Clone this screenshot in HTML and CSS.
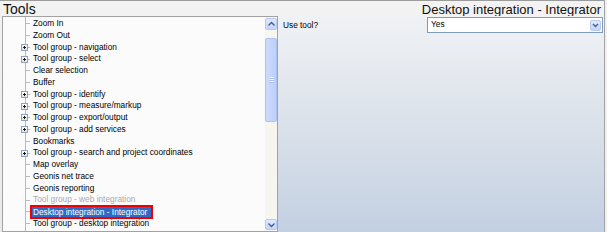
FILE: index.html
```html
<!DOCTYPE html>
<html>
<head>
<meta charset="utf-8">
<title>Tools</title>
<link rel="stylesheet" href="styles.css">
</head>
<body>
<div class="app">
  <div class="header">
    <span class="h-left">Tools</span>
    <span class="h-right">Desktop integration - Integrator</span>
  </div>
  <div class="main">
    <div class="tree-pane">
      <ul class="tree">
        <li class="node"><span class="twig"><span class="hline"></span></span><span class="label">Zoom In</span></li>
        <li class="node"><span class="twig"><span class="hline"></span></span><span class="label">Zoom Out</span></li>
        <li class="node group"><span class="twig"><span class="plus"></span><span class="hline"></span></span><span class="label">Tool group - navigation</span></li>
        <li class="node group"><span class="twig"><span class="plus"></span><span class="hline"></span></span><span class="label">Tool group - select</span></li>
        <li class="node"><span class="twig"><span class="hline"></span></span><span class="label">Clear selection</span></li>
        <li class="node"><span class="twig"><span class="hline"></span></span><span class="label">Buffer</span></li>
        <li class="node group"><span class="twig"><span class="plus"></span><span class="hline"></span></span><span class="label">Tool group - identify</span></li>
        <li class="node group"><span class="twig"><span class="plus"></span><span class="hline"></span></span><span class="label">Tool group - measure/markup</span></li>
        <li class="node group"><span class="twig"><span class="plus"></span><span class="hline"></span></span><span class="label">Tool group - export/output</span></li>
        <li class="node group"><span class="twig"><span class="plus"></span><span class="hline"></span></span><span class="label">Tool group - add services</span></li>
        <li class="node"><span class="twig"><span class="hline"></span></span><span class="label">Bookmarks</span></li>
        <li class="node group"><span class="twig"><span class="plus"></span><span class="hline"></span></span><span class="label">Tool group - search and project coordinates</span></li>
        <li class="node"><span class="twig"><span class="hline"></span></span><span class="label">Map overlay</span></li>
        <li class="node"><span class="twig"><span class="hline"></span></span><span class="label">Geonis net trace</span></li>
        <li class="node"><span class="twig"><span class="hline"></span></span><span class="label">Geonis reporting</span></li>
        <li class="node disabled"><span class="twig"><span class="hline"></span></span><span class="label">Tool group - web integration</span></li>
        <li class="node selected"><span class="twig"><span class="hline"></span></span><span class="label">Desktop integration - Integrator</span></li>
        <li class="node"><span class="twig"><span class="hline"></span></span><span class="label">Tool group - desktop integration</span></li>
      </ul>
      <div class="scrollbar">
        <div class="sb-btn"><svg width="9" height="6" viewBox="0 0 9 6"><path d="M1.5 4.5 L4.5 1.5 L7.5 4.5" fill="none" stroke="#4a5e88" stroke-width="1.4"/></svg></div>
        <div class="sb-track">
          <div class="sb-thumb"><span class="grip"></span></div>
        </div>
        <div class="sb-btn"><svg width="9" height="6" viewBox="0 0 9 6"><path d="M1.5 1.5 L4.5 4.5 L7.5 1.5" fill="none" stroke="#4a5e88" stroke-width="1.4"/></svg></div>
      </div>
    </div>
    <div class="props">
      <span class="prop-label">Use tool?</span>
      <div class="combo">
        <span class="combo-value">Yes</span>
        <span class="combo-btn"><svg width="7" height="5" viewBox="0 0 7 5"><path d="M1 1 L3.5 3.5 L6 1" fill="none" stroke="#4a5e88" stroke-width="1.4"/></svg></span>
      </div>
    </div>
  </div>
</div>
</body>
</html>
```
FILE: styles.css
```css
html, body {
  margin: 0;
  padding: 0;
}

body {
  background: #f0f0f0;
  font-family: "Liberation Sans", Arial, sans-serif;
  color: #000;
}

.app {
  width: 604px;
  height: 231px;
  border-top: 1px solid #9b9b9b;
  border-right: 1px solid #a3a3a3;
  display: flex;
  flex-direction: column;
  background: linear-gradient(#f3f3f3, #e9e9e9);
}

.header {
  height: 14px;
  padding: 1px 3px 0 3px;
  display: flex;
  justify-content: space-between;
  font-size: 13px;
  line-height: 15px;
  color: #111;
  white-space: nowrap;
}

.h-left {
  font-size: 14px;
}

.main {
  flex: 1;
  display: flex;
  min-height: 0;
}

.tree-pane {
  margin-left: 2px;
  width: 274px;
  border: 1px solid #a2a2a2;
  display: flex;
  background: #fbfbfb;
}

.tree {
  flex: 1;
  margin: 0;
  padding: 1px 0 0 0;
  list-style: none;
  overflow: hidden;
  background: linear-gradient(#b9b9b9, #b9b9b9) no-repeat 22px 0 / 1px 100%;
}

.node {
  height: 11.75px;
  display: flex;
  align-items: center;
  white-space: nowrap;
  font-size: 8.3px;
  line-height: 11.75px;
}

.twig {
  width: 27px;
  flex: none;
  align-self: stretch;
  display: flex;
  align-items: center;
  padding-left: 18px;
  box-sizing: border-box;
}

.hline {
  width: 5px;
  height: 1px;
  margin-left: 4px;
  background: #b9b9b9;
}

.group .hline {
  width: 2px;
  margin-left: 0;
}

.plus {
  width: 7px;
  height: 7px;
  box-sizing: border-box;
  border: 1px solid #8ea2bb;
  background:
    linear-gradient(#1a1a1a, #1a1a1a) center / 3px 1px no-repeat,
    linear-gradient(#1a1a1a, #1a1a1a) center / 1px 3px no-repeat,
    linear-gradient(#ffffff, #dfe3e8);
}

.label {
  padding: 0 3px;
}

.disabled .label {
  color: #a9a9a9;
}

.selected .label {
  background: #316ac5;
  color: #fff;
  border: 2px solid #f00000;
  padding: 0 4px 0 1px;
  line-height: 10px;
}

.scrollbar {
  width: 12px;
  flex: none;
  display: flex;
  flex-direction: column;
  background: #f6f5ef;
}

.sb-btn {
  height: 11px;
  margin: 1px 0;
  box-sizing: border-box;
  border: 1px solid #b8caf3;
  border-radius: 2px;
  background: linear-gradient(#e0e9fe, #c3d3fb);
  display: flex;
  align-items: center;
  justify-content: center;
}

.sb-btn:first-child {
  height: 12px;
}

.sb-track {
  flex: 1;
}

.sb-thumb {
  margin-top: 6.5px;
  height: 84px;
  box-sizing: border-box;
  border: 1px solid #aec2f1;
  border-radius: 2px;
  background: linear-gradient(to right, #cddcfd, #bccefb);
  display: flex;
  align-items: center;
  justify-content: center;
}

.grip {
  width: 5px;
  height: 6px;
  background: repeating-linear-gradient(#eef3ff 0 1px, #a9bdee 1px 2px);
}

.props {
  flex: 1;
  display: flex;
  justify-content: space-between;
  align-items: flex-start;
  padding: 0 1px 0 5px;
  background: linear-gradient(to bottom, #f0f2f5 0%, #dde3eb 45%, #c3d0e2 100%);
}

.prop-label {
  margin-top: 4.3px;
  font-size: 8.3px;
  line-height: 11.75px;
  white-space: nowrap;
}

.combo {
  margin-top: 1px;
  width: 176px;
  height: 16px;
  box-sizing: border-box;
  border: 1px solid #7f9db9;
  background: #fff;
  display: flex;
  align-items: center;
  justify-content: space-between;
}

.combo-value {
  padding-left: 3px;
  font-size: 8.3px;
  line-height: 11.75px;
}

.combo-btn {
  width: 11px;
  height: 11px;
  margin-right: 1px;
  box-sizing: border-box;
  border: 1px solid #b8caf3;
  border-radius: 2px;
  background: linear-gradient(#e0e9fe, #c3d3fb);
  display: flex;
  align-items: center;
  justify-content: center;
}
```
